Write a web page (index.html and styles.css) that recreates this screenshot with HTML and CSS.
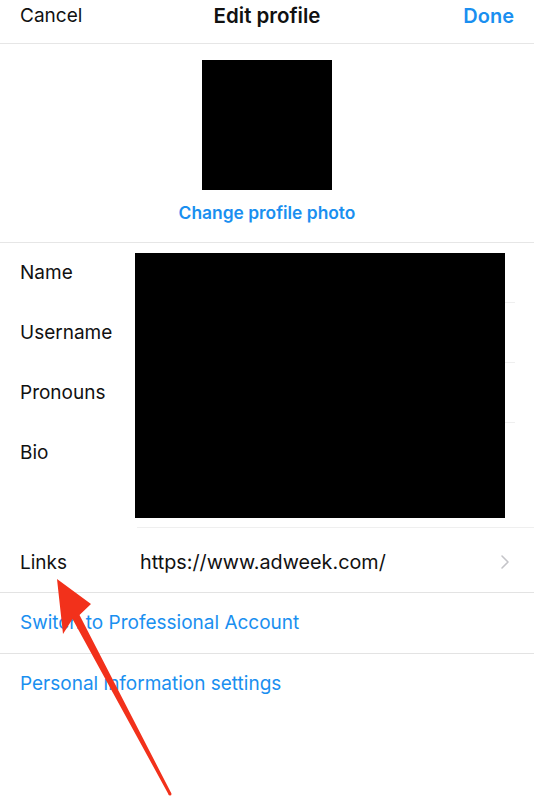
FILE: index.html
```html
<!DOCTYPE html>
<html lang="en">
<head>
  <meta charset="UTF-8" />
  <title>Edit profile</title>
  <link rel="stylesheet" href="styles.css">
</head>
<body>
  <div class="page">
    <header class="topbar">
      <span class="cancel">Cancel</span>
      <span class="title">Edit profile</span>
      <span class="done">Done</span>
    </header>

    <section class="photo">
      <div class="avatar"></div>
      <span class="change">Change profile photo</span>
    </section>

    <section class="fields">
      <div class="field"><span class="label">Name</span><span class="value"></span></div>
      <div class="field"><span class="label">Username</span><span class="value"></span></div>
      <div class="field"><span class="label">Pronouns</span><span class="value"></span></div>
      <div class="field bio"><span class="label">Bio</span><span class="value"></span></div>
      <!-- masque noir sur les infos -->
      <div class="redact"></div>
    </section>

    <div class="links">
      <span class="label">Links</span>
      <span class="url">https://www.adweek.com/</span>
      <svg class="chevron" width="10" height="16" viewBox="0 0 10 16">
        <path d="M2 2 L8 8 L2 14" fill="none" stroke="#c4c4c8" stroke-width="1.6" stroke-linecap="round" stroke-linejoin="round"/>
      </svg>
    </div>

    <div class="action">Switch to Professional Account</div>
    <div class="action">Personal information settings</div>

    <!-- flèche rouge -->
    <svg class="arrow" width="534" height="800" viewBox="0 0 534 800">
      <polygon fill="#f2311b" points="57,579 91,604 79.5,615.1 171.3,793.3 168.7,794.7 72.5,618.9 63,634"/>
      <circle cx="170" cy="794" r="1.5" fill="#f2311b"/>
    </svg>
  </div>
</body>
</html>
```

FILE: styles.css
```css
* { box-sizing: border-box; }
html, body {
  margin: 0; padding: 0;
  background: #fff; color: #111;
  font-family: Inter, "Liberation Sans", Arial, sans-serif;
}
.page { position: relative; width: 534px; height: 800px; overflow: hidden; }

.topbar {
  display: grid; grid-template-columns: 1fr auto 1fr; align-items: center;
  height: 44px; padding: 0 20px 12px; border-bottom: 1px solid #e6e6e6;
  font-size: 19px;
}
.title { font-weight: 600; font-size: 20.5px; }
.done { justify-self: end; color: #1a8ff0; font-weight: 600; font-size: 20px; }

.photo {
  display: flex; flex-direction: column; align-items: center;
  padding-top: 16px; height: 199px; border-bottom: 1px solid #e6e6e6;
}
.avatar { width: 130px; height: 130px; background: #000; }
.change {
  margin-top: 12px; color: #1a8ff0; font-weight: 600; font-size: 17.4px; line-height: 21px;
}

.fields { position: relative; }
.field {
  display: grid; grid-template-columns: 135px 1fr;
  height: 60px; font-size: 19px;
}
.field .label { padding-left: 20px; line-height: 59px; }
.field .value { border-bottom: 1px solid #efefef; margin-right: 19px; }
.field.bio { height: 105px; }
.field.bio .value { margin-left: 2px; margin-right: 0; }
.redact {
  position: absolute; left: 135px; top: 10px;
  width: 370px; height: 265px; background: #000;
}

.links {
  display: grid; grid-template-columns: 120px 1fr 34px; align-items: center;
  height: 65px; padding: 4px 0 0 20px; border-bottom: 1px solid #e3e3e3;
  font-size: 19px;
}
.url { font-size: 19.8px; }
.chevron { justify-self: start; }

.action {
  height: 61px; line-height: 60px; padding-left: 20px;
  color: #1a8ff0; font-size: 19px; border-bottom: 1px solid #e3e3e3;
}
.action:last-of-type { border-bottom: none; }

.arrow { position: absolute; left: 0; top: 0; pointer-events: none; }
```
